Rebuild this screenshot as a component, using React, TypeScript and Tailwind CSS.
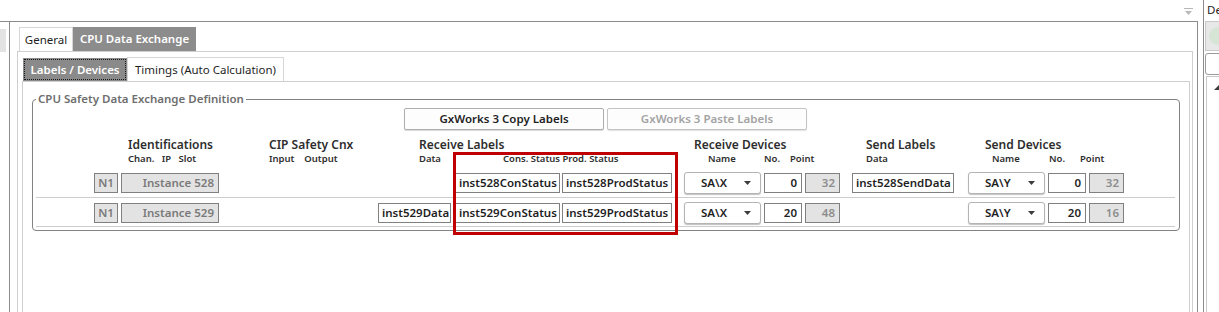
import React from "react";

function Field({ className, children }: { className: string; children?: React.ReactNode }) {
  return (
    <div
      className={
        "h-[20px] border border-[#808080] flex items-center px-[3px] text-[11.5px] font-semibold leading-none whitespace-nowrap " +
        className
      }
    >
      {children}
    </div>
  );
}

function Combo({ value, className }: { value: string; className: string }) {
  return (
    <div
      className={
        "h-[22px] w-[77px] rounded-[3px] border border-[#b4b4b4] bg-white shadow-[0_1px_1px_rgba(0,0,0,0.25)] flex items-center justify-between pl-[16px] pr-[9px] " +
        className
      }
    >
      <span className="text-[11.5px] font-semibold text-[#1f1f1f] leading-none">{value}</span>
      <svg width="7" height="4" viewBox="0 0 7 4">
        <path d="M0 0h7L3.5 4z" fill="#3c3c3c" />
      </svg>
    </div>
  );
}

function DataRow({ n, label, data, con, prod, rNo, rPt, send, sNo, sPt }: {
  n: string;
  label: string;
  data?: string;
  con: string;
  prod: string;
  rNo: string;
  rPt: string;
  send?: string;
  sNo: string;
  sPt: string;
}) {
  return (
    <div className="h-[22px] flex items-center">
      <Field className="ml-[61px] w-[24px] justify-center bg-[#e3e3e3] text-[#7a7a7a]">{n}</Field>
      <Field className="ml-[3px] w-[98px] justify-end pr-[4px] bg-[#e3e3e3] text-[#7a7a7a]">{label}</Field>
      {data ? (
        <>
          <Field className="ml-[159px] w-[73px] bg-white text-[#1f1f1f]">{data}</Field>
          <Field className="ml-[4px] w-[105px] bg-white text-[#1f1f1f]">{con}</Field>
        </>
      ) : (
        <Field className="ml-[236px] w-[105px] bg-white text-[#1f1f1f]">{con}</Field>
      )}
      <Field className="ml-[2px] w-[110px] bg-white text-[#1f1f1f]">{prod}</Field>
      <Combo value="SA\X" className="ml-[12px]" />
      <Field className="ml-[3px] w-[38px] justify-end pr-[4px] bg-white text-[#1f1f1f]">{rNo}</Field>
      <Field className="ml-[3px] w-[35px] justify-end pr-[4px] bg-[#e3e3e3] text-[#8c8c8c]">{rPt}</Field>
      {send ? (
        <>
          <Field className="ml-[12px] w-[102px] bg-white text-[#1f1f1f]">{send}</Field>
          <Combo value="SA\Y" className="ml-[14px]" />
        </>
      ) : (
        <Combo value="SA\Y" className="ml-[128px]" />
      )}
      <Field className="ml-[3px] w-[38px] justify-end pr-[4px] bg-white text-[#1f1f1f]">{sNo}</Field>
      <Field className="ml-[3px] w-[35px] justify-end pr-[4px] bg-[#e3e3e3] text-[#8c8c8c]">{sPt}</Field>
    </div>
  );
}

export default function App() {
  return (
    <div className="relative w-[1219px] h-[312px] overflow-hidden bg-white flex font-['Noto_Sans',sans-serif] text-[#1f1f1f]">
      {/* left dock */}
      <div className="w-[10px] mt-[21px] border-t border-r border-[#8c8c8c] pt-[7px]">
        <div className="h-[23px] w-[6px] bg-[#e3e3e3]" />
      </div>

      {/* main document */}
      <div className="w-[1188px] flex flex-col">
        <div className="h-[21px] flex justify-end pr-[5px] pt-[8px]">
          <svg width="9" height="7" viewBox="0 0 9 7">
            <path d="M0 0.5h9" stroke="#b8b8b8" />
            <path d="M1 3h7L4.5 7z" fill="#b8b8b8" />
          </svg>
        </div>
        <div className="flex-1 flex flex-col border-t border-r border-[#8c8c8c] pl-[7px] pt-[5px]">
          <div className="flex ml-[2px] h-[24px]">
            <div className="w-[54px] border-t border-l border-r border-[#d6d6d6] flex items-center justify-center text-[11.5px] text-[#1f1f1f]">
              General
            </div>
            <div className="w-[123px] bg-[#8c8c8c] flex items-center justify-center text-[11.5px] font-semibold text-white">
              CPU Data Exchange
            </div>
          </div>

          <div className="w-[1176px] flex-1 flex flex-col border-t border-l border-r border-[#cfcfcf] pl-[4px] pt-[5px]">
            <div className="flex ml-[1px] h-[24px]">
              <div className="w-[104px] mt-[1px] bg-[#8a8a8a] p-[1px] flex">
                <div className="flex-1 border border-dotted border-[#1a1a1a] flex items-center justify-center text-[11.5px] font-semibold text-white">
                  Labels / Devices
                </div>
              </div>
              <div className="w-[157px] border-t border-l border-r border-[#d6d6d6] flex items-center justify-center text-[11.5px] text-[#1f1f1f]">
                Timings (Auto Calculation)
              </div>
            </div>

            <div className="w-[1168px] flex-1 border-t border-l border-r border-[#cfcfcf] pt-[9px]">
              <fieldset className="ml-[9px] w-[1148px] rounded-[4px] border border-[#828282] p-0">
                <legend className="ml-[3px] px-[2px] text-[11.5px] leading-[16px] font-semibold text-[#6e6e6e]">
                  CPU Safety Data Exchange Definition
                </legend>

                <div className="flex mt-[1px]">
                  <button className="ml-[371px] w-[200px] h-[22px] rounded-[2px] border border-[#adadad] bg-[#fdfdfd] shadow-[0_1px_1px_rgba(0,0,0,0.15)] text-[11.5px] font-semibold text-[#1f1f1f]">
                    GxWorks 3 Copy Labels
                  </button>
                  <button className="ml-[3px] w-[200px] h-[22px] rounded-[2px] border border-[#c4c4c4] bg-[#fdfdfd] shadow-[0_1px_1px_rgba(0,0,0,0.12)] text-[11.5px] font-semibold text-[#a3a3a3]">
                    GxWorks 3 Paste Labels
                  </button>
                </div>

                <div className="flex mt-[7px] text-[12px] leading-[16px] font-semibold text-[#2e2e2e]">
                  <span className="ml-[95px] w-[141px]">Identifications</span>
                  <span className="w-[150px]">CIP Safety Cnx</span>
                  <span className="w-[275px]">Receive Labels</span>
                  <span className="w-[172px]">Receive Devices</span>
                  <span className="w-[119px]">Send Labels</span>
                  <span>Send Devices</span>
                </div>

                <div className="flex h-[12px] text-[9.5px] leading-[12px] font-semibold text-[#2e2e2e] whitespace-pre">
                  <span className="ml-[95px] w-[141px]">Chan.   IP   Slot</span>
                  <span className="w-[150px]">Input    Output</span>
                  <span className="w-[84px]">Data</span>
                  <span className="w-[191px]">Cons. Status Prod. Status</span>
                  <span className="ml-[14px] w-[56px]">Name</span>
                  <span className="w-[26px]">No.</span>
                  <span className="w-[76px]">Point</span>
                  <span className="w-[126px]">Data</span>
                  <span className="w-[57px]">Name</span>
                  <span className="w-[31px]">No.</span>
                  <span>Point</span>
                </div>

                <div className="mt-[7px]">
                  <DataRow n="N1" label="Instance 528" con="inst528ConStatus" prod="inst528ProdStatus" rNo="0" rPt="32" send="inst528SendData" sNo="0" sPt="32" />
                </div>
                <div className="mt-[3px] ml-[3px] mr-[4px] h-px bg-[#cdcdcd]" />
                <div className="mt-[4px]">
                  <DataRow n="N1" label="Instance 529" data="inst529Data" con="inst529ConStatus" prod="inst529ProdStatus" rNo="20" rPt="48" sNo="20" sPt="16" />
                </div>
                <div className="mt-[2px] mb-[3px] ml-[3px] mr-[4px] h-px bg-[#cdcdcd]" />
              </fieldset>
            </div>
          </div>
        </div>
      </div>

      {/* right dock */}
      <div className="w-[21px] overflow-hidden">
        <div className="ml-[5px] h-full border-l border-[#8c8c8c] flex flex-col">
          <div className="h-[21px] pl-[3px] pt-[2px] text-[11.5px] leading-[16px] text-[#1f1f1f] whitespace-nowrap">De</div>
          <div className="ml-[1px] w-[40px] h-[30px] bg-[#e8e8e8] border border-[#c8c8c8] pl-[3px] pt-[5px]">
            <div className="w-[18px] h-[18px] rounded-full bg-[#d7e5d7]" />
          </div>
          <div className="mt-[2px] ml-[1px] w-[40px] h-[22px] rounded-[3px] border border-[#9a9a9a] bg-white" />
          <div className="mt-px ml-[2px] flex-1 border-t border-l border-[#c8c8c8] pl-[7px] pt-[8px]">
            <svg width="5" height="5" viewBox="0 0 5 5">
              <path d="M5 0v5H0z" fill="#3c3c3c" />
            </svg>
          </div>
        </div>
      </div>

      {/* annotation */}
      <div className="absolute left-[453px] top-[152px] w-[225px] h-[83px] border-[3px] border-[#c00000]" />
    </div>
  );
}
